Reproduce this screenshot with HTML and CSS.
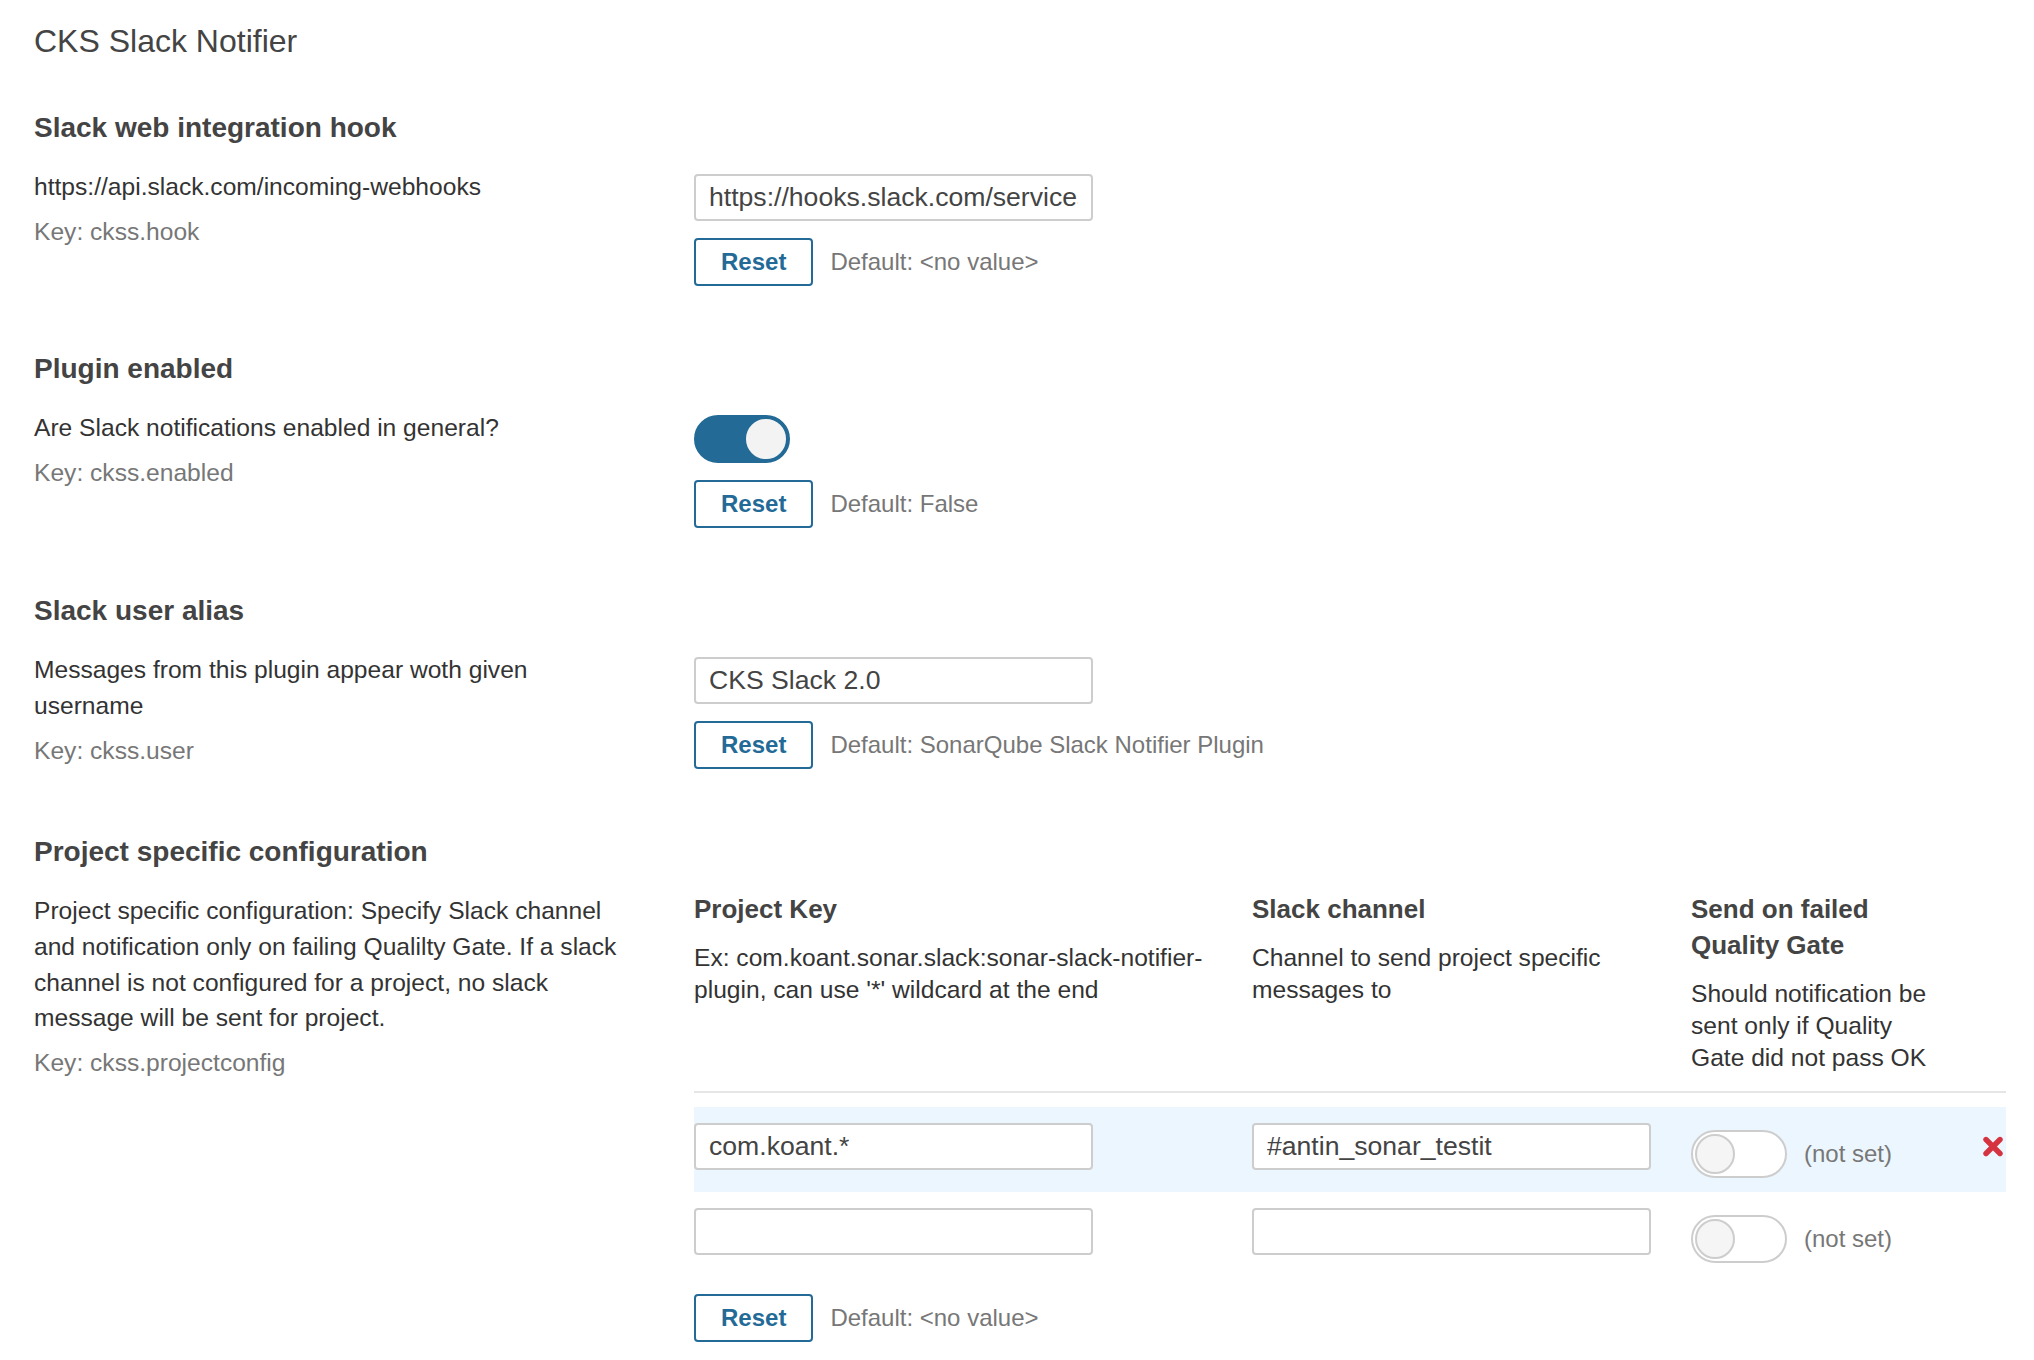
FILE: index.html
```html
<!DOCTYPE html>
<html lang="en">
<head>
<meta charset="utf-8">
<title>CKS Slack Notifier</title>
<link rel="stylesheet" href="styles.css">
</head>
<body>
<main class="page">
  <h1 class="page-title">CKS Slack Notifier</h1>

  <section class="setting">
    <h2 class="setting-name">Slack web integration hook</h2>
    <div class="setting-body">
      <div class="setting-left">
        <p class="setting-desc">https://api.slack.com/incoming-webhooks</p>
        <p class="setting-key">Key: ckss.hook</p>
      </div>
      <div class="setting-right">
        <input class="text-input" type="text" value="https://hooks.slack.com/services/T0A1B2C3D/B4E5F6G7H/abcdefghijklmnop">
        <div class="reset-row">
          <button class="btn-reset" type="button">Reset</button>
          <span class="default-value">Default: &lt;no value&gt;</span>
        </div>
      </div>
    </div>
  </section>

  <section class="setting">
    <h2 class="setting-name">Plugin enabled</h2>
    <div class="setting-body">
      <div class="setting-left">
        <p class="setting-desc">Are Slack notifications enabled in general?</p>
        <p class="setting-key">Key: ckss.enabled</p>
      </div>
      <div class="setting-right">
        <button class="toggle toggle-on" type="button" role="switch" aria-checked="true"><span class="toggle-handle"></span></button>
        <div class="reset-row">
          <button class="btn-reset" type="button">Reset</button>
          <span class="default-value">Default: False</span>
        </div>
      </div>
    </div>
  </section>

  <section class="setting">
    <h2 class="setting-name">Slack user alias</h2>
    <div class="setting-body">
      <div class="setting-left">
        <p class="setting-desc">Messages from this plugin appear woth given username</p>
        <p class="setting-key">Key: ckss.user</p>
      </div>
      <div class="setting-right">
        <input class="text-input" type="text" value="CKS Slack 2.0">
        <div class="reset-row">
          <button class="btn-reset" type="button">Reset</button>
          <span class="default-value">Default: SonarQube Slack Notifier Plugin</span>
        </div>
      </div>
    </div>
  </section>

  <section class="setting">
    <h2 class="setting-name">Project specific configuration</h2>
    <div class="setting-body">
      <div class="setting-left">
        <p class="setting-desc">Project specific configuration: Specify Slack channel and notification only on failing Qualilty Gate. If a slack channel is not configured for a project, no slack message will be sent for project.</p>
        <p class="setting-key">Key: ckss.projectconfig</p>
      </div>
      <div class="setting-right setting-right-flush">
        <div class="config-table">
          <div class="config-head">
            <div class="head-cell">
              <h3 class="col-title">Project Key</h3>
              <p class="col-desc">Ex: com.koant.sonar.slack:sonar-slack-notifier-plugin, can use '*' wildcard at the end</p>
            </div>
            <div class="head-cell">
              <h3 class="col-title">Slack channel</h3>
              <p class="col-desc">Channel to send project specific messages to</p>
            </div>
            <div class="head-cell head-cell-gate">
              <h3 class="col-title">Send on failed Quality Gate</h3>
              <p class="col-desc">Should notification be sent only if Quality Gate did not pass OK</p>
            </div>
            <div class="head-cell"></div>
          </div>

          <div class="config-row is-filled">
            <div class="cell"><input class="text-input" type="text" value="com.koant.*"></div>
            <div class="cell"><input class="text-input" type="text" value="#antin_sonar_testit"></div>
            <div class="cell cell-gate">
              <button class="toggle" type="button" role="switch" aria-checked="false"><span class="toggle-handle"></span></button>
              <span class="not-set">(not set)</span>
            </div>
            <div class="cell cell-action">
              <button class="btn-delete" type="button" aria-label="Delete">
                <svg width="22" height="21" viewBox="0 0 22 21" aria-hidden="true"><path d="M4 3.5 L18 17.5 M18 3.5 L4 17.5" stroke="#d4333f" stroke-width="5.4" stroke-linecap="round" fill="none"/></svg>
              </button>
            </div>
          </div>

          <div class="config-row">
            <div class="cell"><input class="text-input" type="text" value=""></div>
            <div class="cell"><input class="text-input" type="text" value=""></div>
            <div class="cell cell-gate">
              <button class="toggle" type="button" role="switch" aria-checked="false"><span class="toggle-handle"></span></button>
              <span class="not-set">(not set)</span>
            </div>
            <div class="cell cell-action"></div>
          </div>
        </div>
        <div class="reset-row">
          <button class="btn-reset" type="button">Reset</button>
          <span class="default-value">Default: &lt;no value&gt;</span>
        </div>
      </div>
    </div>
  </section>
</main>
</body>
</html>
```

FILE: styles.css
```css
* {
  box-sizing: border-box;
}

html,
body {
  margin: 0;
  background: #fff;
}

body {
  font-family: "Liberation Sans", Arial, sans-serif;
  color: #333;
}

.page {
  padding: 21px 28px 0 34px;
}

.page-title {
  margin: 0 0 51px;
  font-size: 32px;
  line-height: 40px;
  font-weight: 400;
  color: #444;
}

.setting {
  margin-bottom: 67px;
}

.setting:last-child {
  margin-bottom: 0;
}

.setting-name {
  margin: 0 0 25px;
  font-size: 28px;
  line-height: 32px;
  font-weight: 700;
  color: #444;
}

.setting-body {
  display: flex;
  align-items: flex-start;
}

.setting-left {
  flex: 0 0 660px;
  padding-right: 70px;
}

.setting-right {
  flex: 1 1 auto;
  min-width: 0;
  padding-top: 5px;
}

.setting-right-flush {
  padding-top: 0;
  margin-top: -2px;
}

.setting-desc {
  margin: 0;
  font-size: 24.6px;
  line-height: 35.8px;
  color: #333;
}

.setting-key {
  margin: 9px 0 0;
  font-size: 24.6px;
  line-height: 36px;
  color: #777;
}

.text-input {
  display: block;
  width: 399px;
  height: 47px;
  margin: 0;
  padding: 0 13px;
  border: 2px solid #cdcdcd;
  border-radius: 4px;
  background: #fff;
  font-family: "Liberation Sans", Arial, sans-serif;
  font-size: 26.6px;
  color: #444;
  outline: none;
}

.reset-row {
  display: flex;
  align-items: center;
  gap: 17px;
  margin-top: 17px;
}

.btn-reset {
  height: 48px;
  margin: 0;
  padding: 0 25px;
  border: 2px solid #236a97;
  border-radius: 4px;
  background: #fff;
  color: #236a97;
  font-family: "Liberation Sans", Arial, sans-serif;
  font-size: 24px;
  font-weight: 700;
  cursor: pointer;
}

.default-value {
  font-size: 24px;
  color: #777;
}

/* switch */
.toggle {
  display: block;
  width: 96px;
  height: 48px;
  margin: 0;
  padding: 2px;
  border: 2px solid #cdcdcd;
  border-radius: 48px;
  background: #fff;
  cursor: pointer;
}

.toggle-handle {
  display: block;
  width: 40px;
  height: 40px;
  border: 2px solid #cdcdcd;
  border-radius: 50%;
  background: #f5f5f5;
}

.toggle-on {
  border-color: #236a97;
  background: #236a97;
}

.toggle-on .toggle-handle {
  border-color: #f3f3f3;
  background: #f3f3f3;
  transform: translateX(48px);
}

/* project table */
.config-table {
  width: 1312px;
}

.config-head,
.config-row {
  display: grid;
  grid-template-columns: 558px 439px 291px 24px;
}

.config-head {
  padding-bottom: 17px;
  border-bottom: 2px solid #e6e6e6;
  margin-bottom: 14px;
}

.head-cell {
  padding-right: 20px;
}

.head-cell-gate {
  padding-right: 43px;
}

.col-title {
  margin: 0;
  font-size: 26px;
  line-height: 36px;
  font-weight: 700;
  color: #444;
}

.col-desc {
  margin: 15px 0 0;
  font-size: 24.6px;
  line-height: 32px;
  color: #333;
}

.config-row {
  height: 85px;
}

.config-row.is-filled {
  background: #ecf6fe;
}

.cell {
  padding-top: 16px;
}

.cell-gate {
  display: flex;
  align-items: center;
  align-self: start;
  gap: 17px;
  padding-top: 23px;
}

.not-set {
  font-size: 24px;
  color: #777;
}

.cell-action {
  padding-top: 29px;
}

.btn-delete {
  display: block;
  margin: 0;
  padding: 0;
  border: 0;
  background: none;
  line-height: 0;
  cursor: pointer;
}
```
